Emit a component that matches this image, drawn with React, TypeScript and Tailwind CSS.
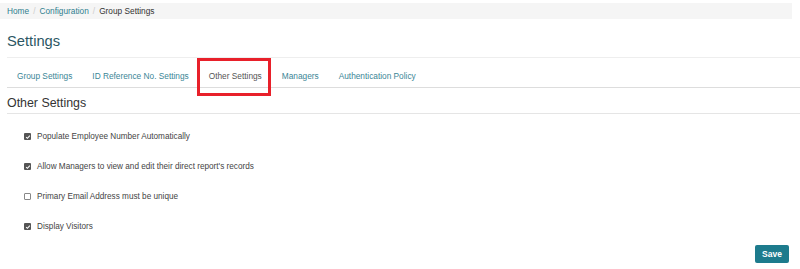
import React from 'react'

const tabs = ['Group Settings', 'ID Reference No. Settings', 'Other Settings', 'Managers', 'Authentication Policy']

const options = [
  { label: 'Populate Employee Number Automatically', checked: true },
  { label: "Allow Managers to view and edit their direct report's records", checked: true },
  { label: 'Primary Email Address must be unique', checked: false },
  { label: 'Display Visitors', checked: true },
]

function Check({ checked }: { checked: boolean }) {
  if (!checked) {
    return <span className="w-[7px] h-[7px] border border-[#888] rounded-[1px] bg-white shrink-0" />
  }
  return (
    <span className="w-[7px] h-[7px] rounded-[1px] bg-[#555] shrink-0 flex items-center justify-center">
      <svg viewBox="0 0 8 8" className="w-[6px] h-[6px]">
        <path d="M1.5 4.2 L3.2 5.8 L6.5 2.2" stroke="white" strokeWidth="1.4" fill="none" />
      </svg>
    </span>
  )
}

export default function App() {
  return (
    <div className="w-[800px] h-[269px] bg-white relative overflow-hidden" style={{ fontFamily: '"Liberation Sans", Arial, sans-serif' }}>
      {/* Breadcrumb */}
      <div className="mt-[3px] mr-[8px] h-[16px] bg-[#f5f5f5] flex items-center px-[7px] text-[8.3px] gap-[4px]">
        <span className="text-[#2f7f8f]">Home</span>
        <span className="text-[#ccc]">/</span>
        <span className="text-[#2f7f8f]">Configuration</span>
        <span className="text-[#ccc]">/</span>
        <span className="text-[#333]">Group Settings</span>
      </div>

      <div className="pl-[7px]">
        <h1 className="text-[14.7px] text-[#2b5663] leading-none pt-[15px] pb-[8px]">Settings</h1>
        <div className="border-t border-[#eee]" />

        {/* Tabs */}
        <div className="relative flex h-[30px] items-center pt-[9px] border-b border-[#ddd]">
          {tabs.map((t, i) => (
            <div
              key={t}
              className={`px-[10px] text-[8.3px] ${i === 2 ? 'text-[#555]' : 'text-[#3b8696]'}`}
            >
              {t}
            </div>
          ))}
          {/* highlight annotation */}
          <div className="absolute left-[190px] top-0 w-[74px] h-[38px] border-[3px] border-[#e8202a]" />
        </div>

        <h2 className="text-[12.4px] text-[#333] leading-none pt-[9px] pb-[4px]">Other Settings</h2>
        <div className="border-t border-[#e5e5e5]" />

        <div className="flex flex-col gap-[21px] pl-[17px] pt-[18px]">
          {options.map(o => (
            <div key={o.label} className="flex items-center gap-[6px] h-[9px]">
              <Check checked={o.checked} />
              <span className="text-[8.2px] text-[#444] leading-none">{o.label}</span>
            </div>
          ))}
        </div>

        <div className="flex justify-end pr-[11px] pt-[14px]">
          <button className="w-[34px] h-[18px] rounded-[2px] bg-[#1d7b8d] text-white text-[8.5px] font-bold">Save</button>
        </div>
      </div>
    </div>
  )
}
